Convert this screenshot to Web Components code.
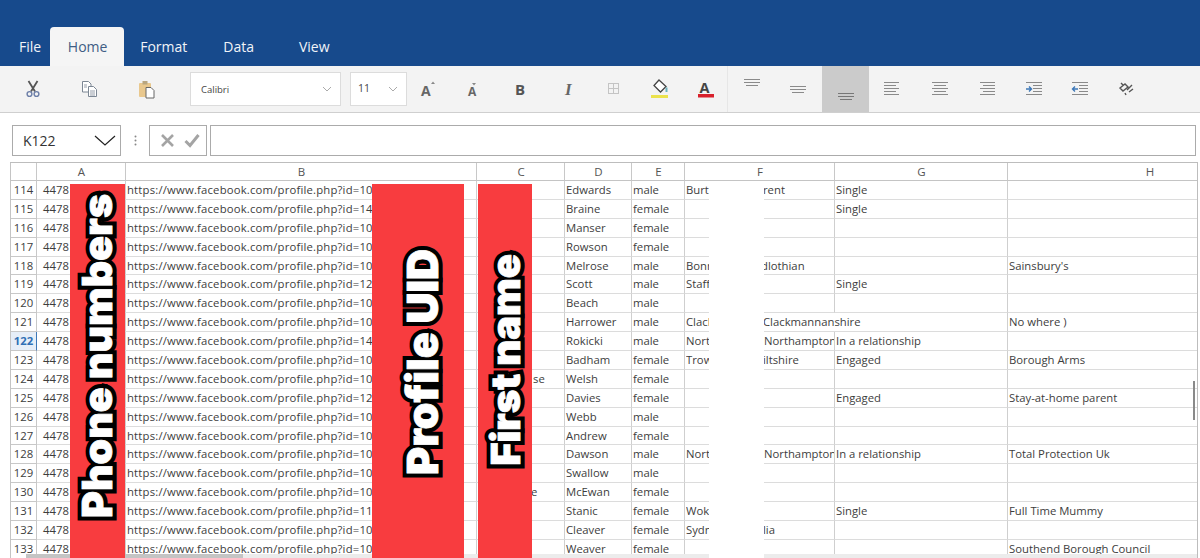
<!DOCTYPE html>
<html>
<head>
<meta charset="utf-8">
<title>Sheet</title>
<style>
  html, body { margin: 0; height: 558px; overflow: hidden; background: #fff; }
  body { font-family: "Open Sans", "Liberation Sans", sans-serif; }
</style>
</head>
<body>
<app-ribbon active="Home" tabs="File,Home,Format,Data,View"></app-ribbon>
<tool-bar></tool-bar>
<formula-bar cell="K122"></formula-bar>
<sheet-grid>
  <red-strip slot="over" x="60" w="55" tx="8" tb="40" size="41" label="Phone numbers"></red-strip>
  <red-strip slot="over" x="362" w="92" tx="31" tb="83" size="43" label="Profile UID"></red-strip>
  <red-strip slot="over" x="468" w="54" tx="9" tb="92" size="40" label="First name"></red-strip>
</sheet-grid>

<script>
const ICONS = {
  cut: `<svg width="16" height="18" viewBox="0 0 16 18" fill="none"><path d="M3.500 1l6.500 10.500M12.500 1L6 11.500" stroke="#555" stroke-width="1.800"/><circle cx="4.500" cy="14" r="2.400" stroke="#6d7fa8" stroke-width="1.400"/><circle cx="11.500" cy="14" r="2.400" stroke="#6d7fa8" stroke-width="1.400"/></svg>`,
  copy: `<svg width="20" height="20" viewBox="0 0 20 20" fill="#fff" stroke="#7c8794"><path d="M2.500 2.500h6l2.500 2.500v8h-8.500z"/><path d="M8.500 7.500h5l3 3v7h-8z"/><path d="M10 12h5M10 14h5M10 16h5M4 6h3M4 8h3" stroke-width=".8"/></svg>`,
  paste: `<svg width="20" height="20" viewBox="0 0 20 20"><rect x="2" y="4" width="12" height="14" rx="1" fill="#e9c88e"/><rect x="5.500" y="2" width="5" height="3.500" fill="#b9a67f"/><path d="M9 8.500h5l3 3v7.500H9z" fill="#fff" stroke="#666"/></svg>`,
  grow: `<svg width="18" height="20" viewBox="0 0 18 20"><text x="1" y="17" font-family="Open Sans" font-weight="700" font-size="14" fill="#666">A</text><path d="M11 5l2-2.500L15 5z" fill="#888"/></svg>`,
  shrink: `<svg width="16" height="20" viewBox="0 0 16 20"><text x="2" y="17" font-family="Open Sans" font-weight="700" font-size="12" fill="#666">A</text><path d="M6 4h4L8 6.500z" fill="#888"/></svg>`,
  bold: `<svg width="16" height="20" viewBox="0 0 16 20"><text x="2" y="16" font-family="Open Sans" font-weight="700" font-size="15" fill="#555">B</text></svg>`,
  italic: `<svg width="16" height="20" viewBox="0 0 16 20"><text x="4" y="16" font-family="Liberation Serif" font-style="italic" font-weight="700" font-size="17" fill="#666">I</text></svg>`,
  border: `<svg width="16" height="16" viewBox="0 0 16 16" fill="none" stroke="#c4c4c4"><rect x="2.500" y="2.500" width="10" height="10"/><path d="M7.500 2.500v10M2.500 7.500h10"/></svg>`,
  fill: `<svg width="22" height="22" viewBox="0 0 22 22" fill="none"><path d="M10 2l7 6.500-5.500 5.500-6.500-6.500z" stroke="#444" stroke-width="1.300" fill="#fff"/><path d="M17.500 9.500v4.500" stroke="#6cb2bd" stroke-width="2"/><rect x="2" y="17" width="17" height="3" fill="#ebe24c"/></svg>`,
  color: `<svg width="20" height="22" viewBox="0 0 20 22"><text x="3.500" y="15" font-family="Open Sans" font-weight="700" font-size="14.500" fill="#444">A</text><rect x="2" y="16" width="16" height="3.500" fill="#d8202c"/></svg>`,
  'v-top': `<svg width="20" height="12" viewBox="0 0 20 12" stroke="#8a8a8a"><path d="M2 1.500h16M2 4.500h16M4 7.500h12"/></svg>`,
  'v-mid': `<svg width="20" height="12" viewBox="0 0 20 12" stroke="#8a8a8a"><path d="M2 2.500h16M2 5.500h16M4 8.500h12"/></svg>`,
  'v-bot': `<svg width="20" height="12" viewBox="0 0 20 12" stroke="#777"><path d="M2 2.500h16M2 5.500h16M4 8.500h12"/></svg>`,
  'h-left': `<svg width="20" height="16" viewBox="0 0 20 16" stroke="#8a8a8a"><path d="M2 1.500h15M2 4.500h12M2 7.500h15M2 10.500h12M2 13.500h15"/></svg>`,
  'h-center': `<svg width="20" height="16" viewBox="0 0 20 16" stroke="#8a8a8a"><path d="M2 1.500h16M4 4.500h12M2 7.500h16M4 10.500h12M2 13.500h16"/></svg>`,
  'h-right': `<svg width="20" height="16" viewBox="0 0 20 16" stroke="#8a8a8a"><path d="M3 1.500h15M6 4.500h12M3 7.500h15M6 10.500h12M3 13.500h15"/></svg>`,
  indent: `<svg width="20" height="16" viewBox="0 0 20 16" fill="none" stroke="#8a8a8a"><path d="M2 1.500h16M9 4.500h9M9 7.500h9M9 10.500h9M2 13.500h16"/><path d="M2 8h5M5 5.500L7.500 8 5 10.500" stroke="#3d78b8" stroke-width="1.400"/></svg>`,
  outdent: `<svg width="20" height="16" viewBox="0 0 20 16" fill="none" stroke="#8a8a8a"><path d="M2 1.500h16M9 4.500h9M9 7.500h9M9 10.500h9M2 13.500h16"/><path d="M8 8H3M5 5.500L2.500 8 5 10.500" stroke="#3d78b8" stroke-width="1.400"/></svg>`,
  wrap: `<svg width="18" height="16" viewBox="0 0 18 16" fill="none" stroke="#555" stroke-width="1.400"><path d="M2 7l5-4 3 3-5 4zM9 9l5-5M11 11l4-3M5 4l-2-2M7 12l1 2"/></svg>`
};

class AppRibbon extends HTMLElement {
  constructor() {
    super();
    this.attachShadow({mode: 'open'});
  }

  connectedCallback() {
    const active = this.getAttribute('active');
    const tabs = this.getAttribute('tabs').split(',');

    this.shadowRoot.innerHTML = `
      <style>
        :host {
          display: flex;
          align-items: flex-end;
          height: 66px;
          box-sizing: border-box;
          background: #174a8c;
          color: #f1f4f8;
          font: 14px/39px "Open Sans", sans-serif;
        }
        span { display: block; height: 39px; }
        .File { padding: 0 9px 0 19px; }
        .Home { width: 73px; padding-left: 1px; text-align: center; margin-right: 16px; background: #f5f5f5; color: #3f5d84; border-radius: 4px 4px 0 0; }
        .Format { margin-right: 36px; }
        .Data { margin-right: 45px; }
      </style>
      ${tabs.map(t => `<span class="${t}${t === active ? ' on' : ''}">${t}</span>`).join('')}
    `;
  }
}

class ToolBar extends HTMLElement {
  constructor() {
    super();
    this.attachShadow({mode: 'open'});
  }

  connectedCallback() {
    const btn = (name, w, extra = '') => `<div class="btn ${extra}" style="width:${w}px">${ICONS[name]}</div>`;

    this.shadowRoot.innerHTML = `
      <style>
        :host {
          display: flex;
          height: 46px;
          padding-left: 5px;
          background: #f3f3f3;
          border-bottom: 1px solid #cfcfcf;
          font-family: "Open Sans", sans-serif;
        }
        .btn { display: flex; align-items: center; justify-content: center; flex: none; height: 46px; }
        .up { align-items: flex-start; padding-top: 12px; height: 34px; }
        .mid { align-items: flex-start; padding-top: 18px; height: 28px; }
        .low { align-items: flex-end; background: #cbcbcb; height: 37px; padding-bottom: 9px; }
        .combo {
          display: flex;
          align-items: center;
          justify-content: space-between;
          box-sizing: border-box;
          flex: none;
          height: 34px;
          margin-top: 6px;
          padding: 0 8px 0 10px;
          background: #fff;
          border: 1px solid #dcdcdc;
          font-size: 9.500px;
          color: #444;
        }
        .combo svg { display: block; }
        .sep { flex: none; width: 1px; height: 46px; background: #e6e6e6; }
      </style>
      ${btn('cut', 56)}${btn('copy', 57)}${btn('paste', 57)}
      <div style="width:15px;flex:none"></div>
      <div class="combo" style="width:151px"><span>Calibri</span>${this.chevron()}</div>
      <div style="width:9px;flex:none"></div>
      <div class="combo" style="width:57px;padding-left:7px"><span style="font-size:10.500px;margin-top:-3px">11</span>${this.chevron()}</div>
      ${btn('grow', 44)}${btn('shrink', 46)}${btn('bold', 48)}${btn('italic', 48)}${btn('border', 42)}${btn('fill', 50)}${btn('color', 42)}
      <div class="sep"></div>
      ${btn('v-top', 48, 'up')}${btn('v-mid', 44, 'mid')}
      <div style="width:2px;flex:none"></div>
      ${btn('v-bot', 47, 'low')}
      ${btn('h-left', 46)}${btn('h-center', 50)}${btn('h-right', 44)}${btn('indent', 50)}${btn('outdent', 42)}${btn('wrap', 52)}
    `;
  }

  chevron() {
    return `<svg width="10" height="6" viewBox="0 0 10 6" fill="none" stroke="#aaa"><path d="M1 1l4 4 4-4"/></svg>`;
  }
}

class FormulaBar extends HTMLElement {
  constructor() {
    super();
    this.attachShadow({mode: 'open'});
  }

  connectedCallback() {
    this.shadowRoot.innerHTML = `
      <style>
        :host {
          display: flex;
          align-items: stretch;
          height: 31px;
          margin: 12px 4px 0 12px;
          font: 14px "Open Sans", sans-serif;
          color: #333;
        }
        .box { box-sizing: border-box; border: 1px solid #ababab; background: #fff; flex: none; }
        .name { display: flex; align-items: center; justify-content: space-between; width: 109px; padding: 0 4px 0 10px; }
        .dots { flex: none; width: 28px; display: flex; align-items: center; justify-content: center; }
        .acts { display: flex; align-items: center; gap: 9px; width: 58px; padding-left: 10px; }
        .input { flex: 1; margin-left: 3px; }
      </style>
      <div class="box name"><span>${this.getAttribute('cell')}</span>
        <svg width="22" height="12" viewBox="0 0 22 12" fill="none" stroke="#222" stroke-width="1.200"><path d="M1 1l10 9 10-9"/></svg></div>
      <div class="dots"><svg width="3" height="11" viewBox="0 0 3 11" fill="#888"><circle cx="1.500" cy="1.500" r="1"/><circle cx="1.500" cy="5.500" r="1"/><circle cx="1.500" cy="9.500" r="1"/></svg></div>
      <div class="box acts">
        <svg width="15" height="15" viewBox="0 0 15 15" stroke="#a4a4a4" stroke-width="2.600"><path d="M2 2l11 11M13 2L2 13"/></svg>
        <svg width="16" height="15" viewBox="0 0 16 15" fill="none" stroke="#a4a4a4" stroke-width="3"><path d="M1.500 8l4.500 4.500L14.500 2"/></svg>
      </div>
      <div class="box input"></div>
    `;
  }
}

const URL_BASE = 'https://www.facebook.com/profile.php?id=';

// row, id prefix, C text, D, E, F left, F right [text, offset], G, H
const ROWS = [
  [114, '10', '', 'Edwards', 'male', 'Burt', ['rent', -1], 'Single', ''],
  [115, '14', '', 'Braine', 'female', '', null, 'Single', ''],
  [116, '10', '', 'Manser', 'female', '', null, '', ''],
  [117, '10', '', 'Rowson', 'female', '', null, '', ''],
  [118, '10', '', 'Melrose', 'male', 'Bonn', ['dlothian', -3], '', "Sainsbury's"],
  [119, '12', '', 'Scott', 'male', 'Staff', null, 'Single', ''],
  [120, '10', '', 'Beach', 'male', '', null, '', ''],
  [121, '10', '', 'Harrower', 'male', 'Clack', ['Clackmannanshire', -1], '', 'No where )'],
  [122, '14', '', 'Rokicki', 'male', 'North', ['Northampton', 0], 'In a relationship', ''],
  [123, '10', '', 'Badham', 'female', 'Trow', ['iltshire', -1], 'Engaged', 'Borough Arms'],
  [124, '10', 'se', 'Welsh', 'female', '', null, '', ''],
  [125, '12', '', 'Davies', 'female', '', null, 'Engaged', 'Stay-at-home parent'],
  [126, '10', '', 'Webb', 'male', '', null, '', ''],
  [127, '10', '', 'Andrew', 'female', '', null, '', ''],
  [128, '10', '', 'Dawson', 'male', 'North', ['Northampton', 0], 'In a relationship', 'Total Protection Uk'],
  [129, '10', '', 'Swallow', 'male', '', null, '', ''],
  [130, '10', 'e', 'McEwan', 'female', '', null, '', ''],
  [131, '11', '', 'Stanic', 'female', 'Wok', null, 'Single', 'Full Time Mummy'],
  [132, '10', '', 'Cleaver', 'female', 'Sydn', ['lia', -1], '', ''],
  [133, '10', '', 'Weaver', 'female', '', null, '', 'Southend Borough Council']
];

class SheetGrid extends HTMLElement {
  constructor() {
    super();
    this.attachShadow({mode: 'open'});
  }

  connectedCallback() {
    const heads = ['', 'A', 'B', 'C', 'D', 'E', 'F', 'G', 'H'];

    const rows = ROWS.map(r => {
      const [num, id, c, d, e, fl, fr, g, h] = r;
      const right = fr ? `<span class="fr" style="margin-left:${fr[1]}px">${fr[0]}</span>` : '';
      // the one long F value runs on over an empty G
      const wide = fr && fr[0].length > 12 && !g;

      return `
        <div class="c num ${num === 122 ? 'sel' : ''}">${num}</div>
        <div class="c a">4478</div>
        <div class="c url">${URL_BASE}${id}</div>
        <div class="c" style="padding-left:${c === 'e' ? 54 : 56}px">${c}</div>
        <div class="c">${d}</div>
        <div class="c">${e}</div>
        <div class="c split" ${wide ? 'style="grid-column:span 2"' : ''}><span class="fl">${fl}</span>${right}</div>
        ${wide ? '' : `<div class="c">${g}</div>`}
        <div class="c">${h}</div>
      `;
    }).join('');

    this.shadowRoot.innerHTML = `
      <style>
        :host {
          display: block;
          position: relative;
          height: 396px;
          margin: 6px 2px 0 10px;
          overflow: hidden;
          border-top: 1px solid #bdbdbd;
          border-right: 1px solid #bdbdbd;
          box-sizing: border-box;
          font: 11.300px/18.900px "Open Sans", sans-serif;
          color: #3d3d3d;
        }
        .grid {
          display: grid;
          grid-template-columns: 26px 89px 351px 88px 67px 53px 150px 173px 284px;
          grid-template-rows: 18px;
          grid-auto-rows: 18.900px;
          width: 1282px;
          border-left: 1px solid #c4c4c4;
        }
        .c {
          box-sizing: border-box;
          min-width: 0;
          padding-left: 1px;
          overflow: hidden;
          white-space: nowrap;
          border-right: 1px solid #cfcfcf;
          border-bottom: 1px solid #dcdcdc;
        }
        .a { padding-left: 6px; }
        .url { letter-spacing: .19px; }
        .h, .num { background: #fff; text-align: center; border-color: #c8c8c8; }
        .h { font-size: 11.500px; line-height: 18px; color: #555; border-bottom-color: #c4c4c4; }
        .num { padding: 0; }
        .sel { background: #e6eef8; color: #2f6fb5; font-weight: 700; border-right: 1px solid #3d78b8; }
        .split { display: flex; }
        .fl { flex: none; width: 23px; overflow: hidden; }
        .fr { flex: none; padding-left: 55px; }
        .track { position: absolute; left: 16px; right: 0; bottom: 0; height: 4px; background: #ececec; }
        .thumb { position: absolute; left: 0; width: 217px; height: 4px; background: #c4c4c4; }
        .vthumb { position: absolute; left: 1183px; top: 218px; width: 2px; height: 39px; background: #8a8a8a; }
        .blank { position: absolute; left: 699px; width: 55px; top: 18px; bottom: 0; background: #fff; }
      </style>
      <div class="grid">
        ${heads.map(h => `<div class="c h">${h}</div>`).join('')}
        ${rows}
      </div>
      <div class="track"><div class="thumb"></div></div>
      <div class="vthumb"></div>
      <div class="blank"></div>
      <slot name="over"></slot>
    `;
  }
}

// painted band over a column, with a rotated caption
class RedStrip extends HTMLElement {
  constructor() {
    super();
    this.attachShadow({mode: 'open'});
  }

  connectedCallback() {
    const attr = name => this.getAttribute(name);

    this.shadowRoot.innerHTML = `
      <style>
        :host {
          position: absolute;
          top: 21px;
          bottom: 0;
          left: ${attr('x')}px;
          width: ${attr('w')}px;
          background: #f83c3f;
        }
        span {
          position: absolute;
          left: ${attr('tx')}px;
          bottom: ${attr('tb')}px;
          writing-mode: vertical-rl;
          transform: rotate(180deg);
          white-space: nowrap;
          font: 900 ${attr('size')}px/38px Inter, Roboto, sans-serif;
          color: #fff;
          -webkit-text-stroke: .8px #fff;
        }
        span::before {
          content: attr(data-t);
          position: absolute;
          inset: 0;
          z-index: -1;
          -webkit-text-stroke: 9px #000;
        }
      </style>
      <span data-t="${attr('label')}">${attr('label')}</span>
    `;
  }
}

if(window.customElements) {
  customElements.define('app-ribbon', AppRibbon);
  customElements.define('tool-bar', ToolBar);
  customElements.define('formula-bar', FormulaBar);
  customElements.define('sheet-grid', SheetGrid);
  customElements.define('red-strip', RedStrip);
}
</script>
</body>
</html>
